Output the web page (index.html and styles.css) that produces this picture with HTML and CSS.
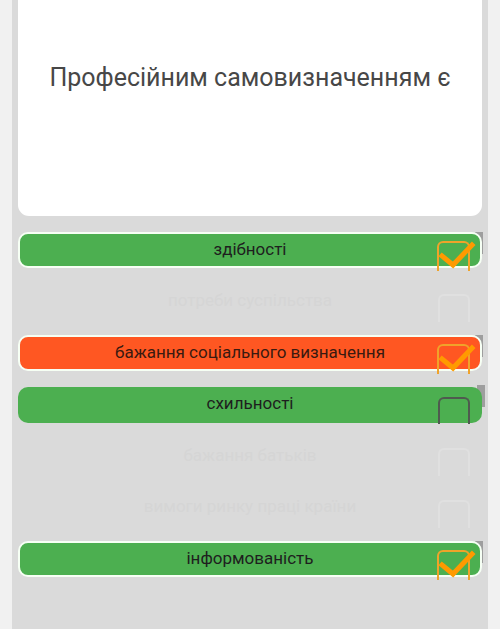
FILE: index.html
```html
<!DOCTYPE html>
<html lang="uk">
<head>
<meta charset="utf-8">
<link rel="stylesheet" href="styles.css">
</head>
<body>
<div class="panel">
  <div class="question">Професійним самовизначенням є</div>
  <div class="options">
    <div class="opt green framed"><span class="label">здібності</span><span class="box checked"><svg viewBox="0 0 40 30" class="tick"><path d="M6 15 L17 24 L36 4"/></svg></span></div>
    <div class="opt faint"><span class="label">потреби суспільства</span><span class="box"></span></div>
    <div class="opt orange framed"><span class="label">бажання соціального визначення</span><span class="box checked"><svg viewBox="0 0 40 30" class="tick"><path d="M6 15 L17 24 L36 4"/></svg></span></div>
    <div class="opt green"><span class="label">схильності</span><span class="box dark"></span></div>
    <div class="opt faint"><span class="label">бажання батьків</span><span class="box"></span></div>
    <div class="opt faint"><span class="label">вимоги ринку праці країни</span><span class="box"></span></div>
    <div class="opt green framed"><span class="label">інформованість</span><span class="box checked"><svg viewBox="0 0 40 30" class="tick"><path d="M6 15 L17 24 L36 4"/></svg></span></div>
  </div>
</div>
</body>
</html>
```

FILE: styles.css
```css
html, body {
  margin: 0;
  padding: 0;
  background: #f1f1f1;
  font-family: Roboto, "Noto Sans", "Liberation Sans", sans-serif;
}
body {
  width: 500px;
  height: 629px;
  overflow: hidden;
}
.panel {
  margin: 0 12px;
  height: 629px;
  background: #dadada;
  padding: 0 6px;
}
.question {
  background: #fff;
  height: 216px;
  border-radius: 0 0 11px 11px;
  display: flex;
  align-items: center;
  justify-content: center;
  font-size: 25px;
  color: #474747;
  box-sizing: border-box;
  padding-bottom: 62px;
}
.options {
  position: relative;
  z-index: 0;
  display: flex;
  flex-direction: column;
  gap: 15.5px;
  padding-top: 16px;
}
.opt {
  position: relative;
  height: 36px;
  border-radius: 10px;
  display: flex;
  align-items: center;
  justify-content: center;
  box-sizing: border-box;
  font-size: 17px;
  color: #1e1e1e;
  padding-bottom: 3px;
}
.opt.framed {
  border: 2px solid #f6fff4;
}
.opt.green { background: #4caf50; }
.opt.orange { background: #ff5722; color: #3a1a10; }
.opt.green::before, .opt.orange::before {
  content: "";
  position: absolute;
  right: -3px;
  top: -2px;
  width: 8px;
  height: 22px;
  background: #9e9e9e;
  z-index: -1;
}
.opt.faint { color: #d5d5d5; }
.label { position: relative; }
.box {
  position: absolute;
  right: 12px;
  top: 10px;
  width: 28px;
  height: 26px;
  border: 2.5px solid #e0e0e0;
  border-bottom: none;
  border-radius: 6px 6px 0 0;
}
.framed .box { right: 10px; top: 7px; width: 29px; height: 28px; }
.box.dark { border-color: #4f5a4f; top: 10px; height: 25px; }
.box.checked { border-color: #f0a32a; }
.tick {
  position: absolute;
  left: -3px;
  top: -2px;
  width: 40px;
  height: 30px;
  overflow: visible;
}
.tick path {
  fill: none;
  stroke: #ff9a00;
  stroke-width: 5;
  stroke-linecap: square;
}
```
